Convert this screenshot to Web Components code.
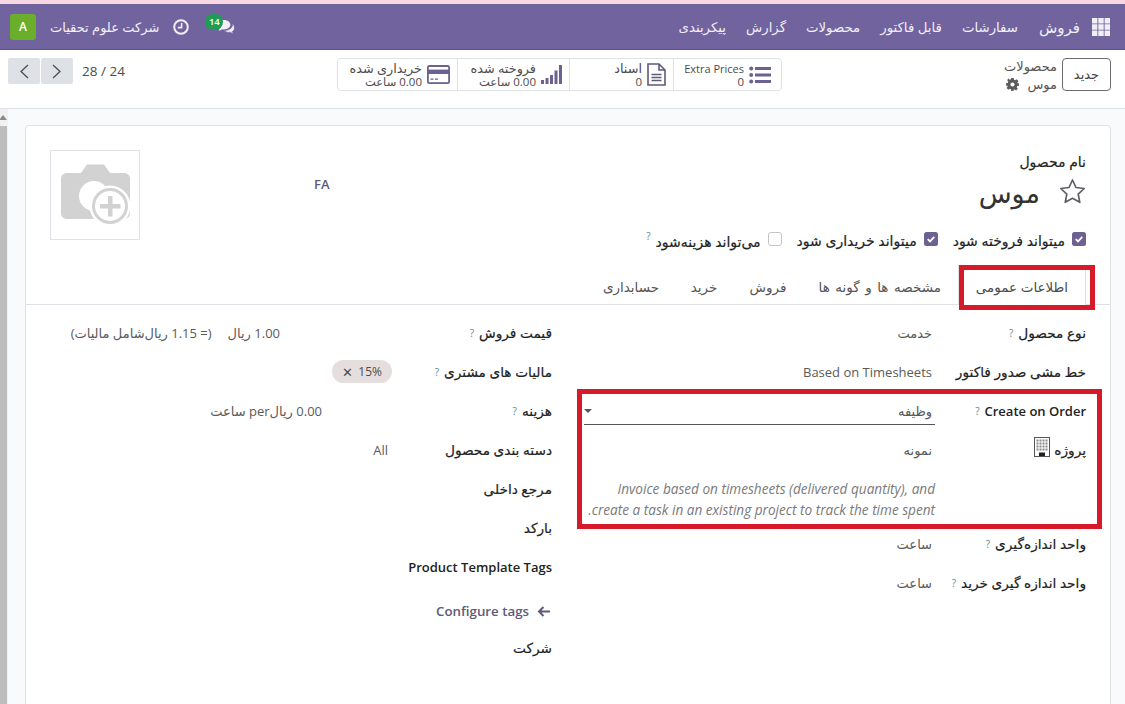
<!DOCTYPE html>
<html lang="fa" dir="rtl"><head><meta charset="utf-8"><title>محصولات</title>
<style>
html,body{margin:0;height:100%;overflow:hidden}
body{font:13px "Open Sans","DejaVu Sans",sans-serif;color:#212529;background:#f9fafb}
</style></head><body>
<o-app>
  <o-navbar slot="nav"></o-navbar>
  <o-control slot="control"></o-control>
  <o-sheet slot="sheet">
    <o-title slot="head"></o-title>
    <o-tabs slot="tabs"></o-tabs>
    <o-group slot="right">
      <o-field label="نوع محصول" help><o-val>خدمت</o-val></o-field>
      <o-field label="خط مشی صدور فاکتور"><o-val>Based on Timesheets</o-val></o-field>
      <o-mark>
        <o-field label="Create on Order" help><o-select>وظیفه</o-select></o-field>
        <o-field label="پروژه" icon="building"><o-val>نمونه</o-val></o-field>
        <o-note>Invoice based on timesheets (delivered quantity), and<br>create a task in an existing project to track the time spent.</o-note>
      </o-mark>
      <o-field label="واحد اندازه‌گیری" help><o-val>ساعت</o-val></o-field>
      <o-field label="واحد اندازه گیری خرید" help><o-val>ساعت</o-val></o-field>
    </o-group>
    <o-group slot="left" wide>
      <o-field label="قیمت فروش" help><o-val indent="112">1.00 ریال</o-val><o-val indent="16">(= 1.15 ریال‌شامل مالیات)</o-val></o-field>
      <o-field label="مالیات های مشتری" help><o-chip>15%</o-chip></o-field>
      <o-field label="هزینه" help><o-val indent="70">0.00 ریال‌per ساعت</o-val></o-field>
      <o-field label="دسته بندی محصول"><o-val indent="4">All</o-val></o-field>
      <o-field label="مرجع داخلی"></o-field>
      <o-field label="بارکد"></o-field>
      <o-field label="Product Template Tags"></o-field>
      <o-link>Configure tags</o-link>
      <o-field label="شرکت"></o-field>
    </o-group>
  </o-sheet>
</o-app>
<script>
const ICONS={
apps:'<svg width="18" height="18" viewBox="0 0 18 18" fill="#f1eff6"><path d="M0 0h5.4v5.4H0zM6.3 0h5.4v5.4H6.3zM12.6 0H18v5.4h-5.4zM0 6.3h5.4v5.4H0zM6.3 6.3h5.4v5.4H6.3zM12.6 6.3H18v5.4h-5.4zM0 12.6h5.4V18H0zM6.3 12.6h5.4V18H6.3zM12.6 12.6H18V18h-5.4z"/></svg>',
clock:'<svg width="16" height="16" viewBox="0 0 16 16" fill="none" stroke="#f1eff6" stroke-width="2"><circle cx="8" cy="8" r="6.8"/><path d="M8.6 4v4.6H4.8" stroke-width="1.6"/></svg>',
chat:'<svg width="19" height="15" viewBox="0 0 19 15" fill="#f1eff6"><path d="M7 1C3.4 1 .6 3.1.6 5.800c0 1.500.9 2.800 2.200 3.700-.2.800-.7 1.500-1.300 2.100 1.400-.1 2.700-.7 3.600-1.400.6.1 1.200.2 1.900.2 3.600 0 6.400-2.100 6.400-4.600S10.600 1 7 1z"/><path d="M15.400 4.400c.1.400.1.800.1 1.200 0 3.300-3.300 5.800-7.500 5.800-.4 0-.8 0-1.200-.1 1.100 1.300 3 2.100 5 2.100.5 0 1-.1 1.500-.2.800.6 1.900 1.100 3.200 1.200-.5-.5-.9-1.200-1.100-1.900 1.300-.8 2.100-2 2.100-3.400 0-1.900-.8-3.700-2.100-4.700z" stroke="#71639e" stroke-width=".7"/></svg>',
gear:'<svg width="13" height="13" viewBox="0 0 16 16" fill="#5c5c5c"><path fill-rule="evenodd" d="M6.500 0h3l.4 2.200 1.400.6L13.200 1.500l2.100 2.100-1.300 1.900.6 1.400L16 6.500v3l-2.200.4-.6 1.400 1.300 1.900-2.100 2.100-1.900-1.300-1.400.6L9.500 16h-3l-.4-2.200-1.400-.6-1.900 1.300L.7 12.400 2 10.500l-.6-1.400L0 9.500v-3l2.200-.4.600-1.400L1.500 2.800 2.800.7l1.900 1.300 1.400-.6zM8 5.400a2.600 2.600 0 100 5.200 2.600 2.600 0 000-5.200z"/></svg>',
list:'<svg width="22" height="18" viewBox="0 0 22 18" fill="#6c6190"><circle cx="2.200" cy="2.500" r="2"/><circle cx="2.200" cy="9" r="2"/><circle cx="2.200" cy="15.500" r="2"/><path d="M6 1h16v3H6zM6 7.500h16v3H6zM6 14h16v3H6z"/></svg>',
doc:'<svg width="19" height="23" viewBox="0 0 19 23" fill="none" stroke="#5f5a78" stroke-width="1.600"><path d="M1 1h11l6 6v15H1zM12 1v6h6"/><path d="M4.500 11.500h10M4.500 14.500h10M4.500 17.500h10" stroke-width="1.300"/></svg>',
bars:'<svg width="21" height="19" viewBox="0 0 21 19" fill="#6c6190"><path d="M0 15h3v4H0zM4.500 13h3v6h-3zM9 10h3v9H9zM13.500 5.500h3V19h-3zM18 0h3v19h-3z"/></svg>',
card:'<svg width="23" height="19" viewBox="0 0 23 19"><rect width="23" height="19" rx="2.500" fill="#6c6190"/><rect x="1.800" y="2" width="19.400" height="2.600" fill="#fff"/><rect x="1.800" y="9" width="19.400" height="8.200" fill="#fff"/><path d="M3.500 13.500h3v1.300h-3zM8 13.500h3v1.300H8z" fill="#6c6190"/></svg>',
prev:'<svg width="10" height="15" viewBox="0 0 10 15" fill="none" stroke="#4a4f55" stroke-width="1.300"><path d="M9 1L2 7.500 9 14"/></svg>',
next:'<svg width="10" height="15" viewBox="0 0 10 15" fill="none" stroke="#4a4f55" stroke-width="1.300"><path d="M1 1l7 6.500L1 14"/></svg>',
star:'<svg width="27" height="26" viewBox="0 0 27 26" fill="none" stroke="#5e5e66" stroke-width="1.700" stroke-linejoin="round"><path d="M13.500 2l3.500 7.500 8.200 1-6 5.700 1.600 8.100-7.300-4-7.300 4 1.600-8.100-6-5.700 8.200-1z"/></svg>',
camera:'<svg width="72" height="64" viewBox="0 0 72 64"><path fill="#d2d2d2" d="M8 10h14l6-8.500h17L51 10h14c3.500 0 6 2.500 6 6v34c0 3.500-2.500 6-6 6H8c-3.500 0-6-2.500-6-6V16c0-3.500 2.500-6 6-6z"/><circle cx="35" cy="33" r="15" fill="#fff"/><circle cx="51" cy="43" r="20.500" fill="#fff"/><circle cx="51" cy="43" r="18" fill="#d2d2d2"/><circle cx="51" cy="43" r="15" fill="#fff"/><path d="M49 33h4.500v8H61.500v4.500H53.500v8H49v-8H41v-4.500h8z" fill="#d2d2d2"/></svg>',
building:'<svg width="16" height="20" viewBox="0 0 16 20"><rect x=".5" y=".5" width="15" height="19" fill="#fff" stroke="#555"/><path fill="#888" d="M2.500 2.500h2v2h-2zM5.500 2.500h2v2h-2zM8.500 2.500h2v2h-2zM11.500 2.500h2v2h-2zM2.500 5.500h2v2h-2zM5.500 5.500h2v2h-2zM8.500 5.500h2v2h-2zM11.500 5.500h2v2h-2zM2.500 8.500h2v2h-2zM5.500 8.500h2v2h-2zM8.500 8.500h2v2h-2zM11.500 8.500h2v2h-2zM2.500 11.500h2v2h-2zM5.500 11.500h2v2h-2zM8.500 11.500h2v2h-2zM11.500 11.500h2v2h-2z"/><path fill="#222" d="M5 15.500h6V19H5z"/></svg>',
check:'<svg width="14" height="14" viewBox="0 0 14 14"><rect width="14" height="14" rx="2.500" fill="#6c6190"/><path d="M3.700 7.200l2.300 2.200 4.300-4.500" fill="none" stroke="#fff" stroke-width="1.800"/></svg>',
box:'<svg width="14" height="14" viewBox="0 0 14 14"><rect x=".5" y=".5" width="13" height="13" rx="2.500" fill="#fff" stroke="#c4c4c4"/></svg>',
arrow:'<svg width="13" height="11" viewBox="0 0 13 11" fill="none" stroke="#5e5a78" stroke-width="2"><path d="M13 5.500H2M6.500 1L2 5.500 6.500 10"/></svg>'
};
const SEMI='font-weight:400;-webkit-text-stroke:.2px currentColor;';
function def(name,css,html,init){
  customElements.define(name,class extends HTMLElement{
    connectedCallback(){
      if(this.shadowRoot)return;
      const r=this.attachShadow({mode:'open'});
      r.innerHTML='<style>'+css+'</style>'+(typeof html==='function'?html(this):html);
      if(init)init(this,r);
    }
  });
}
def('o-icon',':host{display:inline-flex;line-height:0}',h=>ICONS[h.getAttribute('name')]);
def('o-help',':host{display:inline-block;font:400 10px "Open Sans",sans-serif;-webkit-text-stroke:0;color:#5b8a9a;vertical-align:7px;margin-inline-start:5px;line-height:1}','?');

def('o-app',`:host{display:flex;flex-direction:column;height:704px;overflow:hidden}
.stripe{height:4px;background:#f8d7e2;flex:none}
.body{flex:1;display:flex;min-height:0;direction:ltr}
.sb{width:8px;flex:none;background:#f1f1f1;position:relative;display:flex;flex-direction:column}
.sb i{display:block;height:17px;flex:none;position:relative}
.sb i::after{content:"";position:absolute;left:-1px;top:6px;border:4px solid transparent;border-bottom:5px solid #8a8a8a;border-top:0}
.sb b{display:block;flex:1;background:#bdbdbd;width:7px}
.main{flex:1;min-width:0;padding:16px 14px 0 17px;direction:rtl}`,
`<div class="stripe"></div><slot name="nav"></slot><slot name="control"></slot>
<div class="body"><div class="sb"><i></i><b></b></div><div class="main"><slot name="sheet"></slot></div></div>`);

def('o-navbar',`:host{display:flex;align-items:center;height:46px;background:#71639e;color:#f1eff6;padding:0 15px 0 10px;flex:none;box-sizing:border-box;border-bottom:1px solid #5f5480;font-size:13.300px}
o-icon{flex:none}
.brand{font-size:15px;margin-inline-start:12px}
nav{display:flex;align-items:center;gap:20px;margin-inline-start:21px}
.sys{margin-inline-start:auto;display:flex;align-items:center;font-size:13px}
.chat{position:relative;display:inline-flex;margin-inline-end:28px}
.badge{position:absolute;right:13px;top:-5px;width:18px;height:16px;border-radius:8px;background:#1f9d55;color:#fff;font:600 9.500px/15px "Open Sans",sans-serif;text-align:center}
.co{margin-inline:14px 14px}
.av{width:26px;height:26px;border-radius:3px;background:#6aae2b;color:#fff;font:600 12px/26px "Open Sans",sans-serif;text-align:center}`,
`<o-icon name="apps"></o-icon><span class="brand">فروش</span>
<nav><span>سفارشات</span><span>قابل فاکتور</span><span>محصولات</span><span>گزارش</span><span>پیکربندی</span></nav>
<div class="sys"><span class="chat"><o-icon name="chat"></o-icon><span class="badge">14</span></span><o-icon name="clock"></o-icon><span class="co">شرکت علوم تحقیات</span><span class="av">A</span></div>`);

def('o-stat',`:host{display:flex;align-items:center;gap:5px;box-sizing:border-box;padding-inline-start:7px;height:100%;border-inline-start:1px solid #dee2e6;color:#4c4c4c}
:host(:first-child){border-inline-start:0}
div{line-height:13px;white-space:nowrap}
.lab{display:block;font-size:12.800px;line-height:13px}
.lab.lat{font-size:11px}
b{display:block;font-weight:400;font-size:11.500px;line-height:13px}`,
h=>{const t=h.getAttribute('label');return `<o-icon name="${h.getAttribute('icon')}"></o-icon><div><span class="lab${/^[A-Za-z ]+$/.test(t)?' lat':''}">${t}</span><b>${h.getAttribute('value')}</b></div>`});

def('o-control',`:host{display:grid;grid-template-columns:1fr auto 1fr;align-items:start;height:59px;box-sizing:border-box;background:#fff;border-bottom:1px solid #dee2e6;padding:8px 14px 0 8px;flex:none}
.r{display:flex;gap:5px}
.new{width:49px;height:33px;box-sizing:border-box;border:1px solid #6b6b6b;border-radius:4px;font-size:13px;line-height:31px;text-align:center;color:#444;background:#fff}
.bc{font-size:13px;line-height:18px;color:#555;white-space:nowrap;margin-top:-1px}
.bc o-icon{vertical-align:-2px;margin-inline-start:8px}
.stats{display:flex;height:33px;box-sizing:border-box;border:1px solid #dee2e6;border-radius:4px}
.w1{width:107px;padding-inline-start:10px}.w2{width:104px}.w3{width:112px}.w4{width:120px}
.pg{display:flex;justify-content:flex-start;align-items:center;height:26px;direction:ltr;gap:1px}
.pg .n{width:32px;height:26px;background:#dee2e6;display:flex;align-items:center;justify-content:center;border-radius:2px}
.pg span{font-size:13.500px;color:#4c4c4c;margin-left:8px}`,
`<div class="r"><div class="new">جدید</div><div class="bc">محصولات<br>موس<o-icon name="gear"></o-icon></div></div>
<div class="stats"><o-stat class="w1" icon="list" label="Extra Prices" value="0"></o-stat><o-stat class="w2" icon="doc" label="اسناد" value="0"></o-stat><o-stat class="w3" icon="bars" label="فروخته شده" value="0.00 ساعت"></o-stat><o-stat class="w4" icon="card" label="خریداری شده" value="0.00 ساعت"></o-stat></div>
<div class="pg"><div class="n"><o-icon name="prev"></o-icon></div><div class="n"><o-icon name="next"></o-icon></div><span dir="rtl">24 / 28</span></div>`);

def('o-sheet',`:host{display:block;background:#fff;border:1px solid #dee2e6;border-radius:4px 4px 0 0;height:640px;box-sizing:border-box;padding-top:24px}
.head{padding:0 24px}
.tabs{margin-top:15px}
.form{display:grid;grid-template-columns:502px 1fr;column-gap:32px;padding:8px 24px 0 24px}`,
`<div class="head"><slot name="head"></slot></div><div class="tabs"><slot name="tabs"></slot></div>
<div class="form"><slot name="right"></slot><slot name="left"></slot></div>`);

def('o-title',`:host{display:flex;align-items:flex-start}
.t{flex:1;min-width:0}
.lb{font-size:14px;${SEMI}line-height:20px;padding-top:2px;color:#222}
.nm{display:flex;align-items:center;gap:19px;height:38px;font-size:27px;line-height:38px;color:#333}
.nm span{padding-top:4px}
.chk{display:flex;align-items:center;gap:15px;margin-top:22px;height:18px;font-size:14px;${SEMI}color:#222;line-height:18px}
.chk label{display:flex;align-items:center;gap:7px}
.chk o-icon{margin-top:-4px}
.fa{font:600 13px/16px "Open Sans",sans-serif;color:#5e5a78;margin-top:26px;margin-inline-end:174px}
.img{width:90px;height:90px;box-sizing:border-box;border:1px solid #dee2e6;display:flex;align-items:center;justify-content:center}`,
`<div class="t"><div class="lb">نام محصول</div><div class="nm"><o-icon name="star"></o-icon><span>موس</span></div>
<div class="chk"><label><o-icon name="check"></o-icon>میتواند فروخته شود</label><label><o-icon name="check"></o-icon>میتواند خریداری شود</label><label><o-icon name="box"></o-icon><span>می‌تواند هزینه‌شود<o-help></o-help></span></label></div></div>
<div class="fa">FA</div><div class="img"><o-icon name="camera"></o-icon></div>`);

def('o-tabs',`:host{display:flex;height:40px;box-sizing:border-box;border-bottom:1px solid #dee2e6;padding:0 24px;position:relative}
span{display:block;font-size:13.500px;line-height:44px;color:#555;white-space:nowrap;height:40px;box-sizing:border-box;text-align:center;flex:none}
.a{border:1px solid #dee2e6;border-bottom:0;background:#fff;color:#4c4c4c;line-height:42px}
.mk{position:absolute;right:15px;top:0;width:136px;height:45px;box-sizing:border-box;border:5px solid #d8192a;pointer-events:none}`,
`<span class="a" style="width:128px">اطلاعات عمومی</span><span style="width:156.500px;word-spacing:2px">مشخصه ها و گونه ها</span><span style="width:67px">فروش</span><span style="width:61px">خرید</span><span style="width:85px">حسابداری</span><div class="mk"></div>`);

def('o-group',`:host{display:block}`,`<slot></slot>`);

def('o-field',`:host{display:grid;grid-template-columns:151px 1fr;height:39px;align-items:center}
:host-context(o-group[wide]){grid-template-columns:160px 1fr}
.l{font-size:13.700px;${SEMI}color:#222;white-space:nowrap;display:flex;align-items:center}
.l.lat{font:600 13px "Open Sans",sans-serif;-webkit-text-stroke:0}
.v{display:flex;align-items:center;min-width:0}
o-icon{margin-inline-start:4px;margin-top:-6px}`,
h=>{const t=h.getAttribute('label');const lat=/^[A-Za-z ]+$/.test(t);return `<div class="l${lat?' lat':''}"><span>${t}</span>${h.hasAttribute('help')?'<o-help></o-help>':''}${h.getAttribute('icon')?`<o-icon name="${h.getAttribute('icon')}"></o-icon>`:''}</div><div class="v"><slot></slot></div>`});

def('o-val',`:host{display:block;font-size:13px;color:#5a5a5a;white-space:nowrap;margin-inline-start:var(--i,3px)}`,`<slot></slot>`,
h=>{if(h.hasAttribute('indent'))h.style.setProperty('--i',h.getAttribute('indent')+'px')});

def('o-select',`:host{display:flex;justify-content:space-between;align-items:center;width:351px;height:26px;box-sizing:border-box;border-bottom:1px solid #555;font-size:13px;color:#5a5a5a;padding-inline-start:3px;margin-top:2px}
i{width:0;height:0;border:4px solid transparent;border-top:4px solid #555;border-bottom:0}`,`<slot></slot><i></i>`);

def('o-note',`:host{display:block;margin-inline-start:151px;width:351px;font:italic 13.600px/21px "Open Sans",sans-serif;color:#7a7a7a;padding-top:9px;height:46px;white-space:nowrap}`,`<slot></slot>`);

def('o-mark',`:host{display:block;position:relative}
.m{position:absolute;right:-16px;left:-7px;top:-2px;bottom:-5px;border:5px solid #d8192a;pointer-events:none}`,`<slot></slot><div class="m"></div>`);

def('o-chip',`:host{display:inline-flex;align-items:center;gap:5px;height:23px;padding:0 10px;border-radius:12px;background:#e5dedf;font:12px "Open Sans",sans-serif;color:#4c4c4c}
i{font-style:normal;font-size:13px}`,`<slot></slot><i>✕</i>`);

def('o-link',`:host{display:flex;align-items:center;gap:8px;height:42px;padding-top:8px;padding-inline-start:2px;box-sizing:border-box;font:600 13.300px "Open Sans",sans-serif;color:#5e5a78}`,`<o-icon name="arrow"></o-icon><span><slot></slot></span>`);
</script>
</body></html>
